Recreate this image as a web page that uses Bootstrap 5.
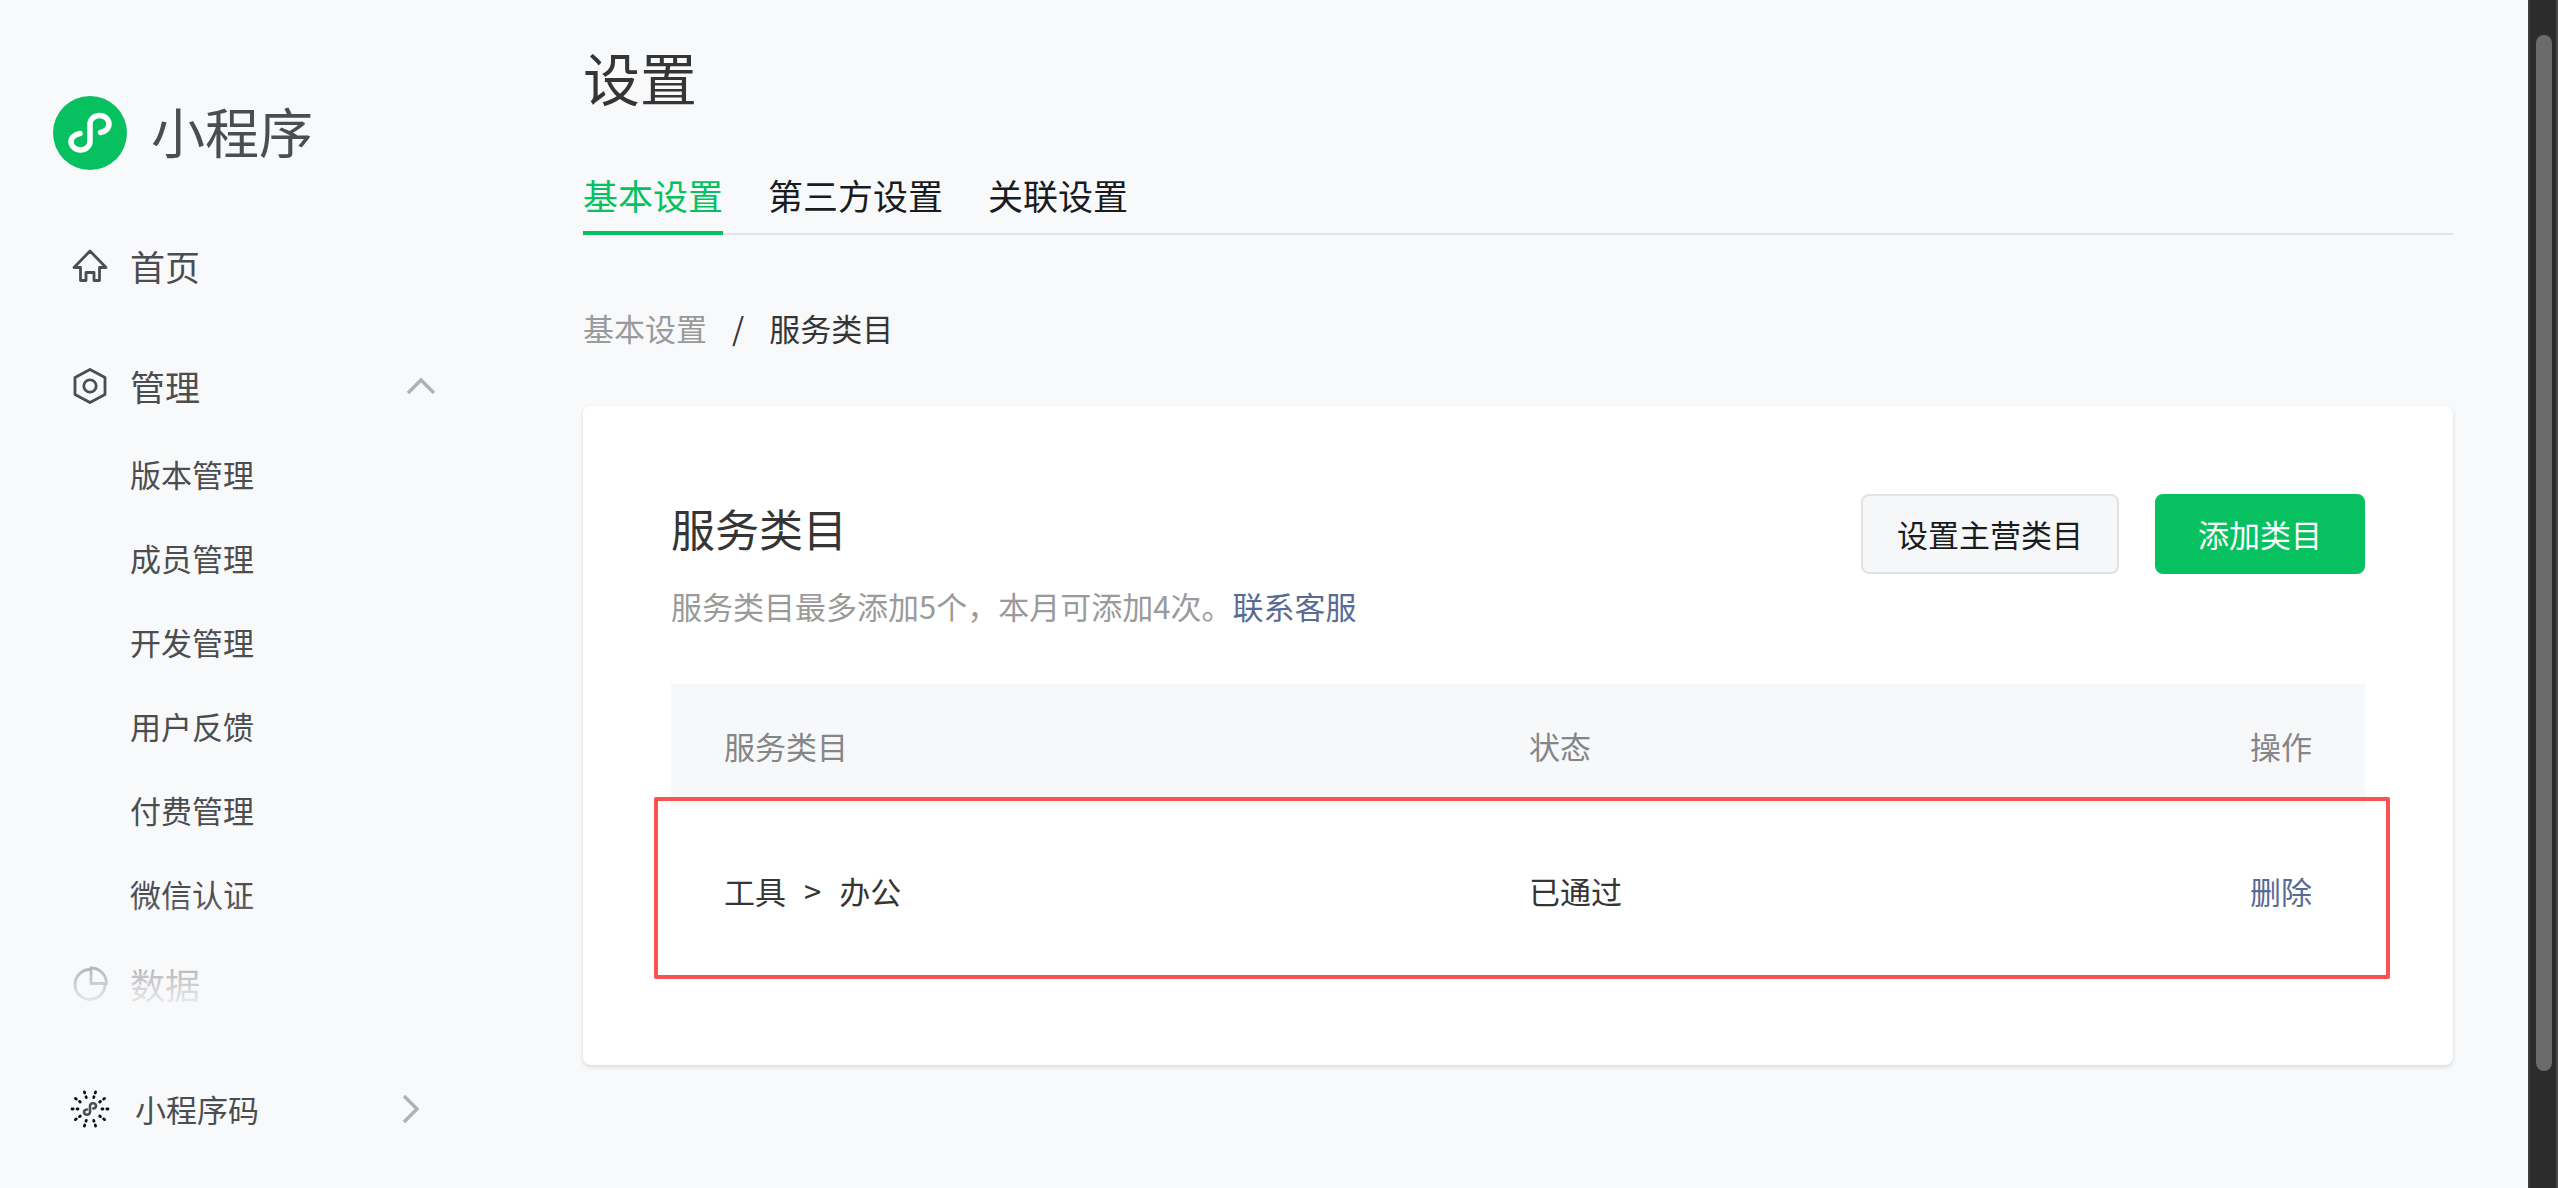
<!DOCTYPE html>
<html lang="zh-CN">
<head>
<meta charset="utf-8">
<meta name="viewport" content="width=device-width, initial-scale=1">
<title>小程序 - 设置</title>
<link href="https://cdn.jsdelivr.net/npm/bootstrap@5.3.0/dist/css/bootstrap.min.css" rel="stylesheet">
<style>
  body { font-family: "Noto Sans CJK SC", sans-serif; font-size: 31px; line-height: 44px; color: #353535; background: #f8f9fb; }
  a { text-decoration: none; }
  .shell { min-height: 100vh; }

  /* sidebar */
  .side { width: 500px; height: 100vh; color: #4c4d4f; }
  .side a, .side button { color: inherit; }
  .brand { padding: 96px 0 0 53px; gap: 24px; font-size: 54px; line-height: 70px; }
  .brand span { padding-bottom: 4px; }
  .menu { min-height: 0; padding-top: 60px; }
  .menu-fade { height: 120px; background: linear-gradient(rgba(248,249,251,0), #f8f9fb); pointer-events: none; }
  .menu-row { height: 72px; padding: 0 64px 0 72px; gap: 22px; font-size: 35px; }
  .menu-row + .menu-row { margin-top: 48px; }
  .menu-sub { margin: 10px 0 12px; }
  .menu-sub a { display: block; height: 84px; line-height: 84px; padding-left: 130px; }
  .side-foot { height: 175px; padding: 15px 80px 0 70px; gap: 25px; }

  /* main column */
  .main { padding: 36px 75px 0 83px; }
  .page-title { font-size: 57px; line-height: 80px; }
  .tabs { margin-top: 53px; gap: 45px; font-size: 35px; border-bottom: 2px solid #e1e2e4; }
  .tabs .nav-link { color: #1a1b1c; padding: 0; height: 66px; line-height: 52px; margin-bottom: -2px; }
  .tabs .nav-link.active { color: #07c160; border-bottom: 4px solid #07c160; }
  .crumbs { margin: 71px 0 56px; gap: 25px; }
  .crumbs a { color: #9a9a9a; }

  .panel { background: #fff; border-radius: 8px; padding: 88px 88px 90px; box-shadow: 0 2px 4px rgba(0,0,0,.13); }
  .panel-title { font-size: 44px; line-height: 64px; margin: 2px 0 24px; }
  .panel-note { color: #9a9a9a; }
  .tone-link { color: #576b95; }
  .actions { gap: 36px; }
  .actions .btn { height: 80px; font-size: 31px; line-height: 44px; border-radius: 8px; border-width: 2px; padding: 0 34px; }
  .btn-plain { background: #f6f7f9; border-color: #e2e3e4; color: #1a1b1c; }
  .btn-go { background: #07c160; border-color: #07c160; color: #fff; --bs-btn-color: #fff; }
  .actions .btn-go { padding: 0 41px; }

  .list-wrap { margin-top: 56px; }
  .list-table { width: 100%; table-layout: fixed; }
  .list-table th { height: 123px; font-weight: 400; color: #858687; background: #f7f8fa; padding: 0 53px; }
  .list-table td { height: 168px; padding: 0 53px; }
  .list-table .c-name { width: 805px; }
  .list-table .c-state { width: 500px; }
  .path-sep { margin: 0 18px; }
  .callout-box { left: -17px; right: -25px; top: 113px; height: 182px; border: 4px solid #fa5151; border-radius: 2px; pointer-events: none; }

  /* scroll gutter */
  .gutter { width: 30px; height: 100vh; background: #2c2c2c; border-left: 2px solid #3c3c3c; border-right: 2px solid #484848; padding: 35px 4px 117px 6px; }
  .gutter-thumb { height: 100%; border-radius: 8px; background: #6b6b6b; }
</style>
<script src="https://cdn.jsdelivr.net/npm/bootstrap@5.3.0/dist/js/bootstrap.bundle.min.js"></script>
</head>
<body>
<div class="shell d-flex">
  <aside class="side d-flex flex-column flex-shrink-0">
    <a href="#" class="brand d-flex align-items-center">
      <svg width="74" height="74" viewBox="0 0 74 74" aria-hidden="true"><circle cx="37" cy="37" r="37" fill="#07c160"/><path d="M27 37.500c-5 .8-9 4-9 8a9.500 8.500 0 0 0 19 0V28a9.500 8.500 0 0 1 19 0c0 4.500-4 8-8.500 8.500" fill="none" stroke="#fff" stroke-width="5.500" stroke-linecap="round"/></svg>
      <span>小程序</span>
    </a>
    <nav class="menu position-relative flex-grow-1 overflow-hidden">
      <a href="#" class="menu-row d-flex align-items-center">
        <svg width="36" height="36" viewBox="0 0 36 36" fill="none" stroke="#4c4d4f" stroke-width="2.800" stroke-linejoin="round" aria-hidden="true"><path d="M18 3 2 19.500h6.500V32.500H14V24.500h8v8h5.500V19.500H34z"/></svg>
        <span>首页</span>
      </a>
      <a href="#" class="menu-row d-flex align-items-center">
        <svg width="36" height="36" viewBox="0 0 36 36" fill="none" stroke="#4c4d4f" stroke-width="2.800" stroke-linejoin="round" aria-hidden="true"><path d="m18 1.500 15 8v17l-15 8-15-8v-17z"/><circle cx="18" cy="18" r="6.200"/></svg>
        <span>管理</span>
        <svg class="ms-auto" width="30" height="18" viewBox="0 0 30 18" fill="none" stroke="#b0b1b3" stroke-width="3.400" aria-hidden="true"><path d="m2 16 13-13 13 13"/></svg>
      </a>
      <div class="menu-sub">
        <a href="#">版本管理</a>
        <a href="#">成员管理</a>
        <a href="#">开发管理</a>
        <a href="#">用户反馈</a>
        <a href="#">付费管理</a>
        <a href="#">微信认证</a>
      </div>
      <a href="#" class="menu-row d-flex align-items-center">
        <svg width="36" height="36" viewBox="0 0 36 36" fill="none" stroke="#4c4d4f" stroke-width="2.800" aria-hidden="true"><path d="M18 3.500a15 15 0 1 0 15 15"/><path d="M19 2a15.500 15.500 0 0 1 15.500 15.500H19z"/></svg>
        <span>数据</span>
      </a>
      <div class="menu-fade position-absolute bottom-0 start-0 end-0"></div>
    </nav>
    <a href="#" class="side-foot d-flex align-items-center">
      <svg width="40" height="40" viewBox="0 0 40 40" fill="none" aria-hidden="true">
        <g stroke="#111" stroke-width="2.800" stroke-linecap="round" stroke-dasharray="1.200 3.900">
          <path d="M38 20h-6M34.600 9.400l-4.900 3.600M25.600 2.900l-1.900 5.700M14.400 2.900l1.900 5.700M5.400 9.400l4.900 3.600M2 20h6M5.400 30.600l4.900-3.600M14.400 37.100l1.900-5.700M25.600 37.100l-1.900-5.700M34.600 30.600l-4.900-3.600"/>
        </g>
        <path d="M17 20.500c-2 .3-3 1.300-3 2.500a3 2.700 0 0 0 6 0v-6a3 2.700 0 0 1 6 0c0 1.300-1 2.300-2.700 2.500" stroke="#4c4d4f" stroke-width="2.600" stroke-linecap="round"/>
      </svg>
      <span>小程序码</span>
      <svg class="ms-auto" width="18" height="30" viewBox="0 0 18 30" fill="none" stroke="#b0b1b3" stroke-width="3.400" aria-hidden="true"><path d="m2 2 13 13-13 13"/></svg>
    </a>
  </aside>

  <main class="main flex-grow-1">
    <h1 class="page-title fw-normal mb-0">设置</h1>
    <nav class="tabs nav">
      <a class="nav-link active" aria-current="page" href="#">基本设置</a>
      <a class="nav-link" href="#">第三方设置</a>
      <a class="nav-link" href="#">关联设置</a>
    </nav>
    <nav class="crumbs d-flex" aria-label="breadcrumb">
      <a href="#">基本设置</a><span>/</span><span>服务类目</span>
    </nav>

    <section class="panel">
      <div class="d-flex justify-content-between align-items-start">
        <div>
          <h2 class="panel-title fw-normal">服务类目</h2>
          <p class="panel-note mb-0">服务类目最多添加5个，本月可添加4次。<a class="tone-link" href="#">联系客服</a></p>
        </div>
        <div class="actions d-flex">
          <button type="button" class="btn btn-plain">设置主营类目</button>
          <button type="button" class="btn btn-go">添加类目</button>
        </div>
      </div>
      <div class="list-wrap position-relative">
        <table class="list-table">
          <thead>
            <tr><th class="c-name" scope="col">服务类目</th><th class="c-state" scope="col">状态</th><th class="text-end" scope="col">操作</th></tr>
          </thead>
          <tbody>
            <tr><td>工具<span class="path-sep">&gt;</span>办公</td><td>已通过</td><td class="text-end"><a class="tone-link" href="#">删除</a></td></tr>
          </tbody>
        </table>
        <div class="callout-box position-absolute"></div>
      </div>
    </section>
  </main>

  <div class="gutter flex-shrink-0" aria-hidden="true"><div class="gutter-thumb"></div></div>
</div>
</body>
</html>
